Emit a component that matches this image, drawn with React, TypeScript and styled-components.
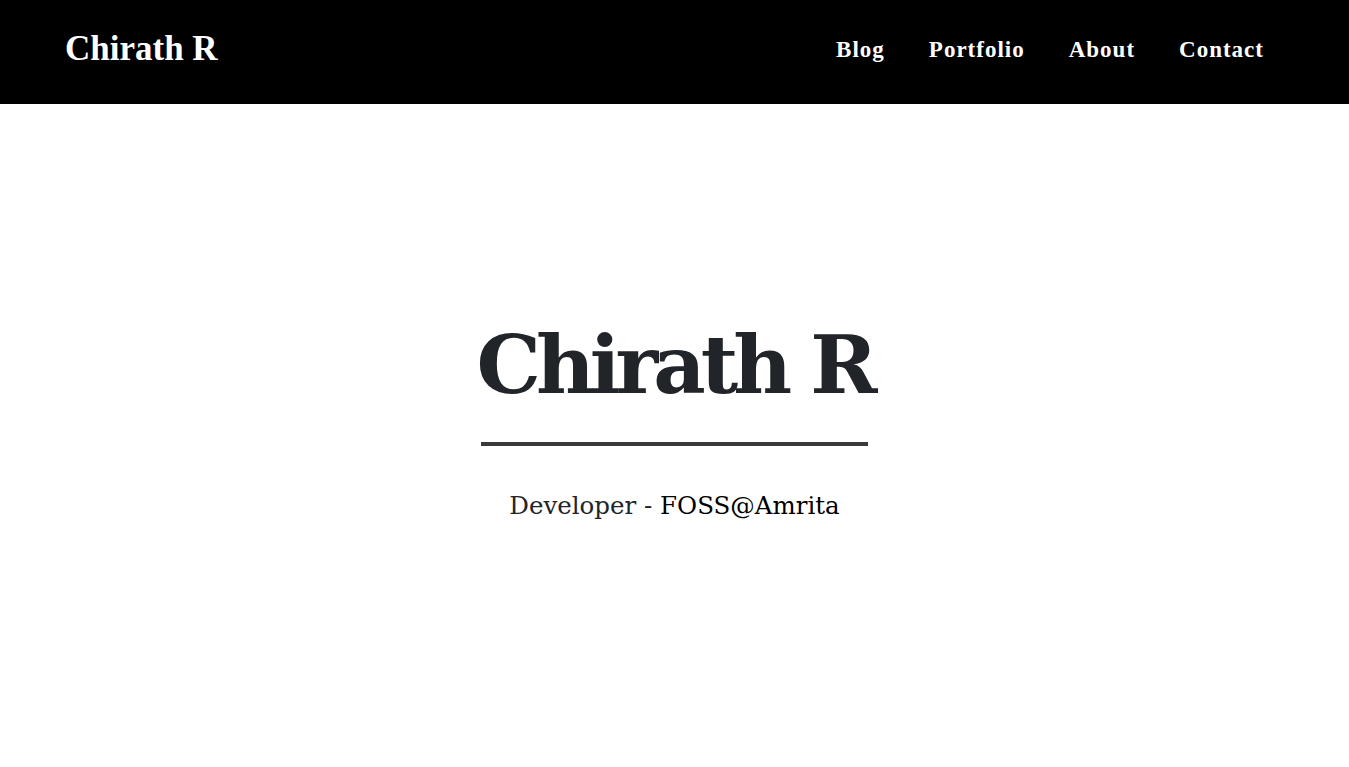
import React from "react";
import styled, { createGlobalStyle } from "styled-components";

const Global = createGlobalStyle`
  html, body { margin: 0; padding: 0; background: #fff; }
  * { box-sizing: border-box; }
`;

const Header = styled.header`
  height: 104px;
  background: #000;
  display: flex;
  align-items: center;
  justify-content: space-between;
  padding: 0 85px 0 65px;
`;

const Logo = styled.a`
  font-family: "Liberation Serif", "Times New Roman", serif;
  font-weight: 700;
  font-size: 35px;
  color: #fff;
  text-decoration: none;
  margin-top: -6px;
`;

const Nav = styled.nav`
  display: flex;
  gap: 44px;
  margin-top: -4px;
`;

const NavLink = styled.a`
  font-family: "Liberation Serif", "Times New Roman", serif;
  font-weight: 700;
  font-size: 23px;
  letter-spacing: 1px;
  color: #fff;
  text-decoration: none;
`;

const Hero = styled.main`
  display: flex;
  flex-direction: column;
  align-items: center;
  padding-top: 220px;
`;

const Title = styled.h1`
  margin: 0;
  font-family: "DejaVu Serif", serif;
  font-weight: 700;
  font-size: 81px;
  letter-spacing: -5px;
  line-height: 1;
  color: #212529;
`;

const Rule = styled.hr`
  width: 387px;
  height: 4px;
  border: 0;
  background: #3a3a3a;
  margin: 37px 0 0;
`;

const Subtitle = styled.p`
  margin: 45px 0 0;
  font-family: "DejaVu Serif", serif;
  font-size: 24.5px;
  color: #212529;
`;

const Org = styled.span`
  color: #000;
`;

export default function App() {
  return (
    <>
      <Global />
      <Header>
        <Logo href="#">Chirath R</Logo>
        <Nav>
          <NavLink href="#">Blog</NavLink>
          <NavLink href="#">Portfolio</NavLink>
          <NavLink href="#">About</NavLink>
          <NavLink href="#">Contact</NavLink>
        </Nav>
      </Header>
      <Hero>
        <Title>Chirath R</Title>
        <Rule />
        <Subtitle>
          Developer - <Org>FOSS@Amrita</Org>
        </Subtitle>
      </Hero>
    </>
  );
}
